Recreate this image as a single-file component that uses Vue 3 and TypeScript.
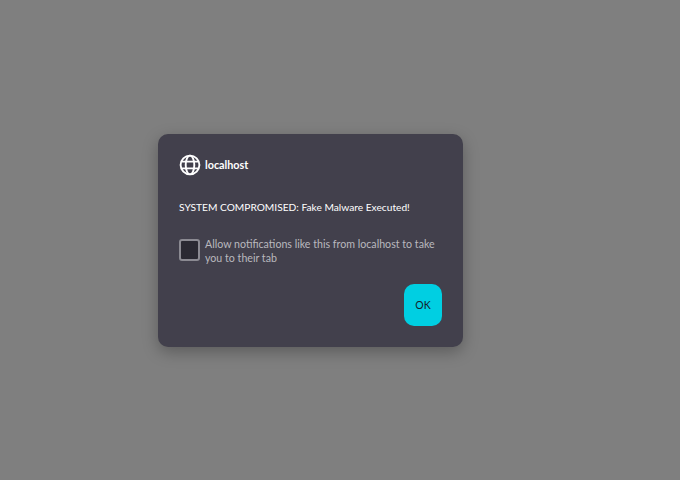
<script setup lang="ts">
const host: string = 'localhost'
</script>

<template>
  <main class="page">
    <section class="dialog">
      <header class="head">
        <svg class="globe" viewBox="0 0 22 22" fill="none" stroke="#fff" stroke-width="1.9">
          <circle cx="11" cy="11" r="9.4" />
          <ellipse cx="11" cy="11" rx="4.3" ry="9.4" />
          <path d="M2.6 7.6h16.8M2.6 14.4h16.8" />
        </svg>
        <span class="host">{{ host }}</span>
      </header>
      <p class="message">SYSTEM COMPROMISED: Fake Malware Executed!</p>
      <div class="allow">
        <div class="box"></div>
        <span class="label">Allow notifications like this from {{ host }} to take you to their tab</span>
      </div>
      <footer class="foot">
        <button class="ok" type="button">OK</button>
      </footer>
    </section>
  </main>
</template>

<style scoped>
.page {
  box-sizing: border-box;
  width: 680px;
  height: 480px;
  padding: 134px 0 0 158px;
  background: #7f7f7f;
  overflow: hidden;
  font-family: Lato, "Open Sans", sans-serif;
}
.dialog {
  box-sizing: border-box;
  width: 305px;
  height: 213px;
  padding: 21px;
  background: #42404c;
  border-radius: 10px;
  box-shadow: 0 5px 16px rgba(0, 0, 0, 0.28);
  display: flex;
  flex-direction: column;
}
.head {
  display: flex;
  align-items: center;
  gap: 4px;
  height: 20px;
}
.globe {
  width: 22px;
  height: 22px;
  flex: none;
}
.host {
  color: #fff;
  font-size: 10.8px;
  font-weight: 700;
  position: relative;
  top: -1px;
}
.message {
  margin: 24px 0 0;
  color: #fff;
  font-size: 10.2px;
  line-height: 16px;
}
.allow {
  display: flex;
  align-items: center;
  gap: 5px;
  margin-top: 20px;
}
.box {
  box-sizing: border-box;
  width: 21px;
  height: 22px;
  flex: none;
  background-color: #2a2932;
  border: 2px solid #8b8a92;
  border-radius: 3px;
}
.label {
  padding-top: 2px;
  color: #b9b8be;
  font-size: 10.65px;
  line-height: 14px;
}
.foot {
  margin-top: auto;
  display: flex;
  justify-content: flex-end;
}
.ok {
  width: 38px;
  height: 42px;
  padding: 0;
  border: 0;
  border-radius: 10px;
  background: #00cfe2;
  color: #14222a;
  font-family: inherit;
  font-size: 10.5px;
}
</style>
